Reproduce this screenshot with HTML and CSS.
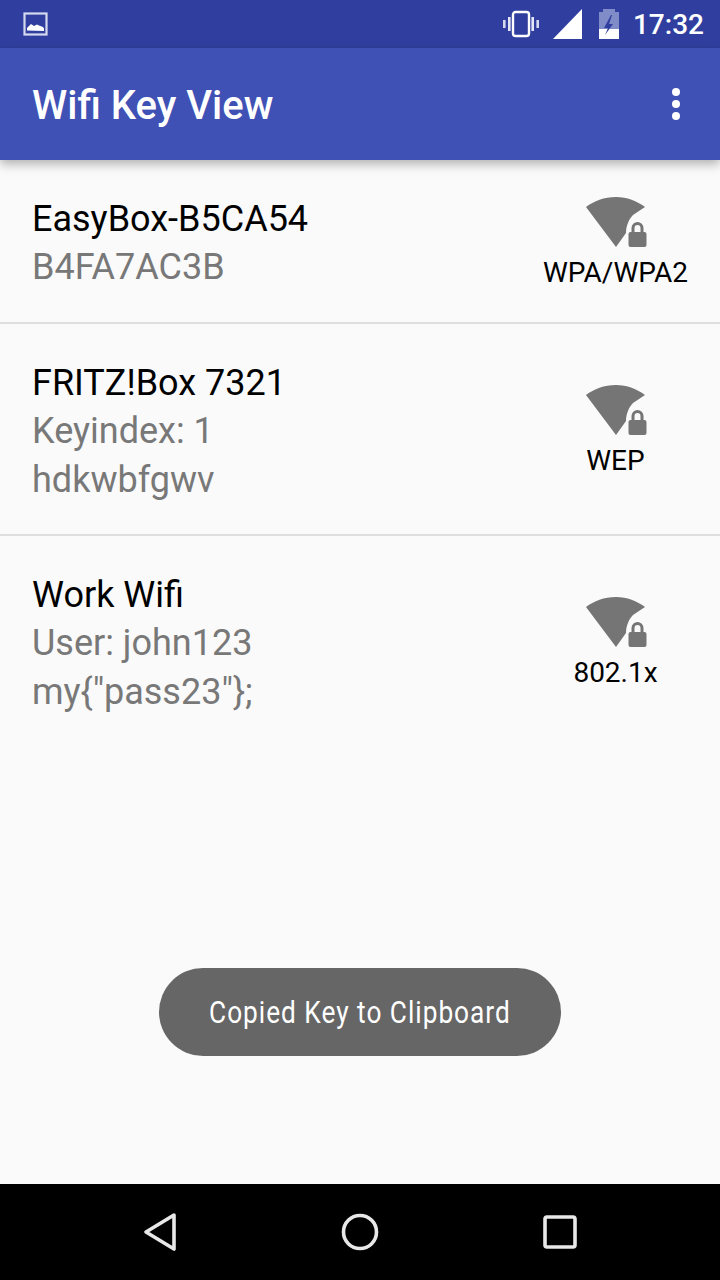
FILE: index.html
```html
<!DOCTYPE html>
<html lang="en">
<head>
    <meta charset="UTF-8">
    <meta name="viewport" content="width=device-width, initial-scale=1.0">
    <title>Wifi Key View</title>
    <link rel="stylesheet" href="styles.css">
</head>
<body>
    <div class="phone">
        <!-- Status bar -->
        <div class="status-bar">
            <svg class="status-img" width="26" height="24" viewBox="0 0 26 24">
                <rect x="1.5" y="1.5" width="22" height="21" fill="none" stroke="#d5d9f0" stroke-width="2.2"/>
                <path d="M4 18.5v-2.500l4-4 3 2 3-1.500 2 1 4 1.500 1 1.500v2.500z" fill="#fff"/>
            </svg>
            <div class="status-right">
                <svg width="36" height="28" viewBox="0 0 36 28">
                    <rect x="10" y="2" width="16" height="24" rx="2.500" fill="none" stroke="#fff" stroke-width="2.400"/>
                    <rect x="5" y="7" width="2.600" height="14" fill="#e4e7f6"/>
                    <rect x="28.400" y="7" width="2.600" height="14" fill="#e4e7f6"/>
                    <rect x="0" y="10" width="2.600" height="8" fill="#d5d9f0"/>
                    <rect x="33.400" y="10" width="2.600" height="8" fill="#d5d9f0"/>
                </svg>
                <svg class="signal" width="30" height="30" viewBox="0 0 30 30">
                    <path d="M0 30 29 0v30z" fill="#fff"/>
                </svg>
                <svg class="battery" width="20" height="30" viewBox="0 0 20 30">
                    <path d="M4 0h12v3h4v27H0V3h4z" fill="#7f8cc8"/>
                    <path d="M0 20h20v10H0z" fill="#fff"/>
                    <path d="M12 6 5 19h4l-3 7 8-11h-4l3-9z" fill="#303f9f"/>
                </svg>
                <span class="clock">17:32</span>
            </div>
        </div>

        <!-- App bar -->
        <div class="app-bar">
            <span class="app-title">Wifi Key View</span>
            <div class="menu-dots"><i></i><i></i><i></i></div>
        </div>

        <div class="list">
            <div class="row">
                <div class="row-text">
                    <div class="ssid">EasyBox-B5CA54</div>
                    <div class="detail">B4FA7AC3B</div>
                </div>
                <div class="security">
                    <svg class="wifi-lock" width="62" height="52" viewBox="0 1 62 52">
                        <path d="M31 1C19 1 9 5 1 11l30 40 10-14C41 30 44 23 48 19l12-8C52 5 42 1 31 1z" fill="#757575"/>
                        <path d="M46.500 36v-4a6 6 0 0 1 12 0v4h1a2 2 0 0 1 2 2v11a2 2 0 0 1-2 2h-14a2 2 0 0 1-2-2V38a2 2 0 0 1 2-2zm3 0h6v-4a3 3 0 0 0-6 0z" fill="#757575" fill-rule="evenodd"/>
                    </svg>
                    <span class="sec-label">WPA/WPA2</span>
                </div>
            </div>
            <div class="row">
                <div class="row-text">
                    <div class="ssid">FRITZ!Box 7321</div>
                    <div class="detail">Keyindex: 1</div>
                    <div class="detail">hdkwbfgwv</div>
                </div>
                <div class="security">
                    <svg class="wifi-lock" width="62" height="52" viewBox="0 1 62 52">
                        <path d="M31 1C19 1 9 5 1 11l30 40 10-14C41 30 44 23 48 19l12-8C52 5 42 1 31 1z" fill="#757575"/>
                        <path d="M46.500 36v-4a6 6 0 0 1 12 0v4h1a2 2 0 0 1 2 2v11a2 2 0 0 1-2 2h-14a2 2 0 0 1-2-2V38a2 2 0 0 1 2-2zm3 0h6v-4a3 3 0 0 0-6 0z" fill="#757575" fill-rule="evenodd"/>
                    </svg>
                    <span class="sec-label">WEP</span>
                </div>
            </div>
            <div class="row last">
                <div class="row-text">
                    <div class="ssid">Work Wifi</div>
                    <div class="detail">User: john123</div>
                    <div class="detail">my{"pass23"};</div>
                </div>
                <div class="security">
                    <svg class="wifi-lock" width="62" height="52" viewBox="0 1 62 52">
                        <path d="M31 1C19 1 9 5 1 11l30 40 10-14C41 30 44 23 48 19l12-8C52 5 42 1 31 1z" fill="#757575"/>
                        <path d="M46.500 36v-4a6 6 0 0 1 12 0v4h1a2 2 0 0 1 2 2v11a2 2 0 0 1-2 2h-14a2 2 0 0 1-2-2V38a2 2 0 0 1 2-2zm3 0h6v-4a3 3 0 0 0-6 0z" fill="#757575" fill-rule="evenodd"/>
                    </svg>
                    <span class="sec-label">802.1x</span>
                </div>
            </div>
            <div class="toast"><span>Copied Key to Clipboard</span></div>
        </div>

        <!-- Navigation bar -->
        <div class="nav-bar">
            <svg width="34" height="40" viewBox="0 0 34 40">
                <path d="M31 3 3 20l28 17z" fill="none" stroke="#e8e8e8" stroke-width="3.600" stroke-linejoin="round"/>
            </svg>
            <svg width="38" height="38" viewBox="0 0 38 38">
                <circle cx="19" cy="19" r="16.500" fill="none" stroke="#e8e8e8" stroke-width="3.600"/>
            </svg>
            <svg width="34" height="34" viewBox="0 0 34 34">
                <rect x="2" y="2" width="30" height="30" rx="2" fill="none" stroke="#e8e8e8" stroke-width="3.600"/>
            </svg>
        </div>
    </div>
</body>
</html>
```

FILE: styles.css
```css
html, body {
    margin: 0;
    padding: 0;
}

body {
    font-family: Roboto, "Liberation Sans", sans-serif;
    background-color: #fafafa;
}

.phone {
    width: 720px;
    height: 1280px;
    display: flex;
    flex-direction: column;
    overflow: hidden;
}

.status-bar {
    height: 48px;
    background-color: #303f9f;
    display: flex;
    align-items: center;
    justify-content: space-between;
    padding: 0 16px 0 23px;
    color: #fff;
}

.status-right {
    display: flex;
    align-items: center;
}

.signal {
    margin-left: 14px;
}

.battery {
    margin-left: 16px;
}

.clock {
    font-size: 28px;
    font-weight: 500;
    margin-left: 14px;
}

.app-bar {
    height: 112px;
    box-sizing: border-box;
    padding: 2px 40px 0 32px;
    background-color: #3f51b5;
    display: flex;
    align-items: center;
    justify-content: space-between;
    color: #fff;
    box-shadow: 0 4px 10px rgba(0, 0, 0, 0.3);
    position: relative;
    z-index: 1;
}

.app-title {
    font-size: 40px;
    font-weight: 500;
}

.menu-dots {
    display: flex;
    flex-direction: column;
    gap: 4px;
    margin-top: -2px;
}

.menu-dots i {
    width: 8px;
    height: 8px;
    border-radius: 50%;
    background-color: #fff;
}

.list {
    flex: 1;
    position: relative;
}

.row {
    box-sizing: border-box;
    min-height: 164px;
    display: flex;
    justify-content: space-between;
    align-items: center;
    padding: 0 32px;
    border-bottom: 2px solid #dedede;
}

.row.last {
    border-bottom-color: transparent;
}

.row-text {
    align-self: flex-start;
    padding: 35px 0 29px;
}

.ssid {
    font-size: 36px;
    line-height: 48px;
    color: #000;
}

.detail {
    font-size: 36px;
    line-height: 49px;
    color: #787878;
}

.security {
    width: 144px;
    height: 100px;
    padding-top: 6px;
    box-sizing: border-box;
    display: flex;
    flex-direction: column;
    align-items: center;
    margin-right: 0.5px;
}

.wifi-lock {
    display: block;
    margin-bottom: 6px;
}

.sec-label {
    font-size: 28px;
    line-height: 36px;
    color: #000;
    white-space: nowrap;
}

.toast {
    position: absolute;
    left: 159px;
    top: 808px;
    width: 402px;
    height: 88px;
    border-radius: 44px;
    background-color: #666;
    color: #fff;
    display: flex;
    align-items: center;
    justify-content: center;
    font-size: 32px;
}

.toast span {
    transform: scaleX(0.82);
    letter-spacing: 1.2px;
    white-space: nowrap;
}

.nav-bar {
    height: 96px;
    background-color: #000;
    display: flex;
    align-items: center;
    justify-content: space-between;
    padding: 0 143px;
}
```
